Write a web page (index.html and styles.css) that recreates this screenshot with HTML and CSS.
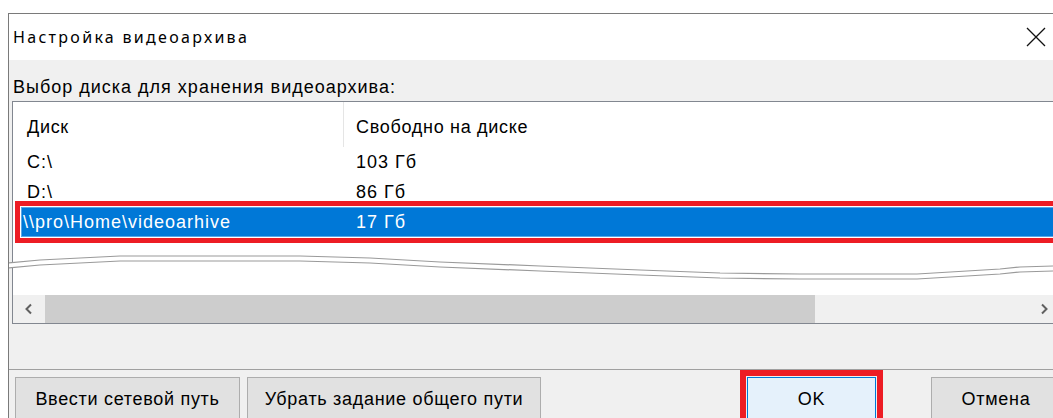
FILE: index.html
```html
<!DOCTYPE html>
<html lang="ru">
<head>
<meta charset="utf-8">
<title>Настройка видеоархива</title>
<link rel="stylesheet" href="styles.css">
</head>
<body>
<div class="screen">
  <div class="window">
    <div class="titlebar">
      <span class="title">Настройка видеоархива</span>
      <svg class="close" width="20" height="20" viewBox="0 0 20 20" aria-label="Закрыть">
        <path d="M1 1 L19 19 M19 1 L1 19" stroke="#111" stroke-width="1.3" fill="none"/>
      </svg>
    </div>
    <div class="dialog-body">
      <div class="label">Выбор диска для хранения видеоархива:</div>
      <div class="listview">
        <div class="lv-header">
          <div class="cell c1">Диск</div>
          <div class="cell c2">Свободно на диске</div>
        </div>
        <div class="lv-row">
          <div class="cell c1">C:\</div>
          <div class="cell c2">103 Гб</div>
        </div>
        <div class="lv-row">
          <div class="cell c1">D:\</div>
          <div class="cell c2">86 Гб</div>
        </div>
        <div class="lv-row selected">
          <div class="cell c1">\\pro\Home\videoarhive</div>
          <div class="cell c2">17 Гб</div>
        </div>
        <div class="lv-fill"></div>
        <div class="hscroll">
          <div class="sb-btn">
            <svg width="10" height="12" viewBox="0 0 10 12"><path d="M7 1.5 L2.5 6 L7 10.5" stroke="#606060" stroke-width="2" fill="none"/></svg>
          </div>
          <div class="sb-thumb"></div>
          <div class="sb-track"></div>
          <div class="sb-btn">
            <svg width="10" height="12" viewBox="0 0 10 12"><path d="M3 1.5 L7.5 6 L3 10.5" stroke="#606060" stroke-width="2" fill="none"/></svg>
          </div>
        </div>
      </div>
      <div class="footer">
        <button class="btn btn-net">Ввести сетевой путь</button>
        <button class="btn btn-clear">Убрать задание общего пути</button>
        <button class="btn btn-ok">OK</button>
        <button class="btn btn-cancel">Отмена</button>
      </div>
    </div>
    <!-- torn edge across the list: the view is cut to shorten it -->
    <svg class="tear" width="1045" height="40" viewBox="8 245 1045 40">
      <polygon fill="#fff" points="8,263 40,260 120,256 300,256 370,258 440,262 540,266 640,270 720,273 800,274 917,274 967,271 1000,269 1020,267 1053,266 1053,271 1020,272 1000,274 967,276 917,279 800,279 720,278 640,275 540,271 440,267 370,263 300,261 120,261 40,265 8,268"/>
      <polyline fill="none" stroke="#9a9a9a" stroke-width="1.2" points="8,263 40,260 120,256 300,256 370,258 440,262 540,266 640,270 720,273 800,274 917,274 967,271 1000,269 1020,267 1053,266"/>
      <polyline fill="none" stroke="#9a9a9a" stroke-width="1.2" points="8,268 40,265 120,261 300,261 370,263 440,267 540,271 640,275 720,278 800,279 917,279 967,276 1000,274 1020,272 1053,271"/>
    </svg>
  </div>
</div>
</body>
</html>
```

FILE: styles.css
```css
html, body {
  margin: 0;
  padding: 0;
  background: #ffffff;
  overflow: hidden;
}

body {
  width: 1053px;
  height: 418px;
  font-family: "Liberation Sans", Arial, sans-serif;
  font-size: 18px;
  letter-spacing: 1px;
  color: #000;
}

.screen {
  padding: 13px 0 0 8px;
}

.window {
  position: relative;
  width: 1060px;
  height: 420px;
  border-top: 1px solid #7a7a7a;
  border-left: 1px solid #7a7a7a;
  background: #f0f0f0;
  overflow: hidden;
}

/* caption */
.titlebar {
  height: 46px;
  background: #ffffff;
  display: flex;
  align-items: center;
  justify-content: space-between;
  padding: 0 23px 0 4px;
}

.title {
  font-family: "Noto Sans", "Liberation Sans", sans-serif;
  font-size: 16px;
  letter-spacing: 2.3px;
}

.close {
  display: block;
}

/* client area */
.label {
  padding: 17px 0 0 4px;
  line-height: 20px;
  margin-bottom: 4px;
}

.listview {
  box-sizing: border-box;
  width: 1049px;
  margin-left: 3px;
  border: 1px solid #828790;
  background: #ffffff;
  display: flex;
  flex-direction: column;
}

.lv-header,
.lv-row {
  display: flex;
  white-space: nowrap;
}

.cell {
  box-sizing: border-box;
}

.lv-header {
  height: 45px;
  letter-spacing: 0.7px;
}

.lv-header .c1 {
  width: 331px;
  padding: 15px 0 0 14px;
  line-height: 20px;
  border-right: 1px solid #e5e5e5;
}

.lv-header .c2 {
  padding: 15px 0 0 12px;
  line-height: 20px;
}

.lv-row {
  height: 30px;
  line-height: 30px;
}

.lv-row .c1 {
  width: 331px;
  padding-left: 14px;
}

.lv-row .c2 {
  padding-left: 12px;
}

.lv-row.selected {
  margin-left: 8px;
  background: #0078d7;
  color: #ffffff;
  outline: 5px solid #ed1c24;
  outline-offset: 1px;
  box-shadow: inset 0 0 0 1px #5aa6e6;
}

.lv-row.selected .c1 {
  width: 323px;
  padding-left: 2px;
}

.lv-fill {
  height: 58px;
}

/* horizontal scroll bar */
.hscroll {
  height: 28px;
  display: flex;
  background: #f0f0f0;
}

.sb-btn {
  width: 32px;
  display: flex;
  align-items: center;
  justify-content: center;
}

.sb-thumb {
  width: 770px;
  background: #cdcdcd;
}

.sb-track {
  flex: 1;
}

/* button row */
.footer {
  margin-top: 45px;
  border-top: 1px solid #a0a0a0;
  padding: 7px 0 0 6px;
  display: flex;
  align-items: flex-start;
}

.btn {
  box-sizing: border-box;
  height: 44px;
  margin: 0;
  padding: 0;
  background: #e1e1e1;
  border: 1px solid #adadad;
  border-radius: 0;
  font-family: "Liberation Sans", Arial, sans-serif;
  font-size: 18px;
  letter-spacing: 0.7px;
  color: #000;
  flex: none;
}

.btn-net {
  width: 225px;
}

.btn-clear {
  width: 294px;
  margin-left: 7px;
}

.btn-ok {
  width: 129px;
  margin-left: 206px;
  background: #e5f1fb;
  border-color: #0078d7;
  outline: 6px solid #ed1c24;
  outline-offset: 1px;
}

.btn-cancel {
  width: 130px;
  margin-left: 55px;
}

.tear {
  position: absolute;
  left: -1px;
  top: 231px;
}
```
